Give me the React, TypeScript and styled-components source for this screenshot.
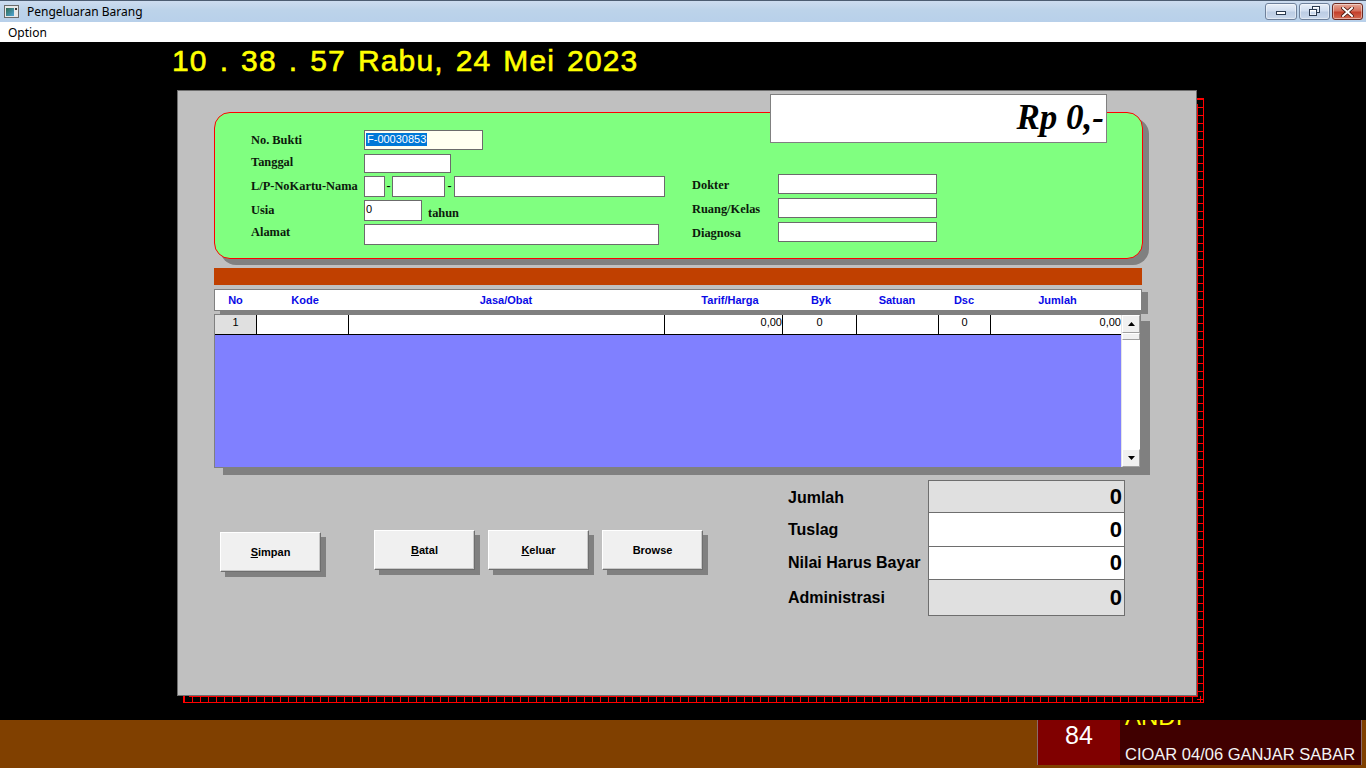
import React from 'react';
import styled, { createGlobalStyle } from 'styled-components';

const Global = createGlobalStyle`
  html, body { margin: 0; padding: 0; background: #000; }
  body { width: 1366px; height: 768px; overflow: hidden; }
  * { box-sizing: border-box; }
`;

const Screen = styled.div`
  width: 1366px;
  height: 768px;
  display: flex;
  flex-direction: column;
  overflow: hidden;
  font-family: "Liberation Sans", Arial, sans-serif;
`;

/* ---------- window chrome ---------- */
const TitleBar = styled.div`
  height: 22px;
  flex: none;
  display: flex;
  align-items: center;
  border-top: 1px solid #4d5d72;
  background: linear-gradient(#cddcef, #bcd3ea 45%, #b8d0ea);
  padding-left: 4px;
`;

const TitleText = styled.span`
  font: 12px "Noto Sans", "Open Sans", sans-serif;
  color: #000;
  margin-left: 8px;
  line-height: 16px;
`;

const WinButtons = styled.div`
  margin-left: auto;
  align-self: flex-start;
  margin-top: 2px;
  margin-right: 3px;
  display: flex;
  gap: 2px;
`;

const WinBtn = styled.div<{ $close?: boolean; $w: number }>`
  width: ${p => p.$w}px;
  height: 17px;
  border: 1px solid ${p => (p.$close ? '#6b2a22' : '#6f819b')};
  border-radius: 3px;
  background: ${p =>
    p.$close
      ? 'linear-gradient(#e6a796, #d5705d 45%, #c43f2b 55%, #d46a52)'
      : 'linear-gradient(#e8eff8, #d1def0 45%, #bccde4 55%, #c9d8ec)'};
  box-shadow: inset 0 0 0 1px rgba(255, 255, 255, 0.45);
  display: flex;
  align-items: center;
  justify-content: center;
`;

const MenuBar = styled.div`
  height: 20px;
  flex: none;
  background: #fff;
  display: flex;
  align-items: center;
  padding-left: 8px;
  font: 12px "Noto Sans", "Open Sans", sans-serif;
  color: #000;
`;

/* ---------- main black area ---------- */
const Main = styled.div`
  flex: 1;
  background: #000;
  isolation: isolate;
  display: flex;
  flex-direction: column;
`;

const Clock = styled.div`
  margin: 2px 0 0 172px;
  height: 30px;
  line-height: 30px;
  font: 30px "Liberation Sans", Arial, sans-serif;
  -webkit-text-stroke: 0.6px #ffff00;
  letter-spacing: 1.15px;
  word-spacing: 2.5px;
  color: #ffff00;
  white-space: nowrap;
`;

const Panel = styled.div`
  position: relative;
  margin: 16px 0 0 177px;
  width: 1020px;
  height: 606px;
  background: #c0c0c0;
  border: 1px solid #6e6e6e;
  padding: 21px 0 0 36px;
  display: flex;
  flex-direction: column;
  align-items: flex-start;
`;

const Ladder = styled.div`
  position: absolute;
  left: 5px;
  top: 7px;
  right: -8px;
  bottom: -8px;
  z-index: -1;
  border: 1px solid #ff0000;
  background:
    repeating-linear-gradient(to bottom, #ff0000 0 1px, transparent 1px 8px) right top / 6px 100% no-repeat,
    repeating-linear-gradient(to right, #ff0000 0 1px, transparent 1px 8px) left bottom / 100% 6px no-repeat;
  &::after {
    content: '';
    position: absolute;
    inset: 5px;
    background: #000;
    border: 1px solid #ff0000;
  }
`;

/* ---------- patient box ---------- */
const GreenBox = styled.div`
  width: 929px;
  height: 147px;
  background: #80ff80;
  border: 1px solid #ff0000;
  border-radius: 16px;
  box-shadow: 6px 6px 0 #808080;
  padding: 17px 0 0 36px;
  display: flex;
  align-items: flex-start;
`;

const LeftForm = styled.div`
  width: 414px;
  display: grid;
  grid-template-columns: 113px auto;
  grid-template-rows: 24px 22px 24px 24px 21px;
`;

const RightForm = styled.div`
  margin: 44px 0 0 27px;
  display: grid;
  grid-template-columns: 86px 159px;
  grid-template-rows: 24px 24px 20px;
`;

const Label = styled.span<{ $shift?: number }>`
  font: bold 12.4px "Liberation Serif", "Times New Roman", serif;
  line-height: 20px;
  margin-top: ${p => p.$shift ?? 0}px;
  color: #0c1a0c;
  white-space: nowrap;
`;

const FieldRow = styled.div`
  display: flex;
  align-items: flex-start;
`;

const Field = styled.div<{ $w: number; $h?: number; $bg?: string }>`
  width: ${p => p.$w}px;
  height: ${p => p.$h ?? 20}px;
  flex: none;
  background: ${p => p.$bg ?? '#fff'};
  border: 1px solid #6b6b6b;
  font: 11px "Liberation Sans", Arial, sans-serif;
  line-height: 13px;
  color: #000;
  padding: 2px 0 0 1px;
  overflow: hidden;
  white-space: nowrap;
`;

const Selected = styled.span`
  display: inline-block;
  background: #0078d7;
  color: #fff;
  padding: 0 1px;
  height: 13px;
`;

const Dash = styled.span<{ $w: number }>`
  width: ${p => p.$w}px;
  flex: none;
  text-align: center;
  font: bold 12px "Liberation Serif", "Times New Roman", serif;
  line-height: 20px;
  color: #000;
`;

const Unit = styled.span`
  margin: 3px 0 0 6px;
  font: bold 12.4px "Liberation Serif", "Times New Roman", serif;
  line-height: 20px;
  color: #0c1a0c;
`;

const RpBox = styled.div`
  position: absolute;
  left: 592px;
  top: 3px;
  width: 337px;
  height: 49px;
  background: #fff;
  border: 1px solid #808080;
  padding-right: 2px;
  text-align: right;
  font: italic bold 35px "Liberation Serif", "Times New Roman", serif;
  line-height: 46px;
  color: #000;
  white-space: nowrap;
`;

/* ---------- item grid ---------- */
const OrangeBar = styled.div`
  margin-top: 9px;
  width: 928px;
  height: 17px;
  background: #c04000;
`;

const columns = '41px 92px 316px 118px 74px 82px 52px 131px';

const GridHeader = styled.div`
  margin-top: 4px;
  width: 928px;
  height: 22px;
  background: #fff;
  border: 1px solid #808080;
  box-shadow: 6px 3px 0 #808080;
  display: grid;
  grid-template-columns: ${columns} 1fr;
  align-items: center;
`;

const HeadCell = styled.span<{ $shift?: number }>`
  text-align: center;
  padding-left: ${p => (p.$shift ?? 0) * 2}px;
  font: bold 11px "Liberation Sans", Arial, sans-serif;
  color: #0a0ae6;
  white-space: nowrap;
`;

const Grid = styled.div`
  margin-top: 3px;
  width: 927px;
  height: 154px;
  border: 1px solid #808080;
  box-shadow: 9px 7px 0 #808080;
  background: #8080ff;
  display: flex;
`;

const GridBody = styled.div`
  flex: 1;
  display: flex;
  flex-direction: column;
`;

const DataRow = styled.div`
  height: 20px;
  display: grid;
  grid-template-columns: ${columns};
  border-bottom: 1px solid #000;
`;

const Cell = styled.div<{ $align?: 'left' | 'center' | 'right'; $fixed?: boolean }>`
  background: ${p => (p.$fixed ? '#e0e0e0' : '#fff')};
  border-left: ${p => (p.$fixed ? 'none' : '1px solid #000')};
  text-align: ${p => p.$align ?? 'left'};
  font: 11px "Liberation Sans", Arial, sans-serif;
  line-height: 15px;
  color: #000;
  overflow: hidden;
  white-space: nowrap;
`;

const ScrollBar = styled.div`
  width: 19px;
  background: #fff;
  border-left: 1px solid #e4e4e4;
  display: flex;
  flex-direction: column;
`;

const ScrollBtn = styled.div`
  height: 18px;
  background: #f0f0f0;
  border: 1px solid #fff;
  border-right-color: #a0a0a0;
  border-bottom-color: #a0a0a0;
  display: flex;
  align-items: center;
  justify-content: center;
`;

const Thumb = styled.div`
  height: 7px;
  background: #f0f0f0;
  border: 1px solid #fff;
  border-right-color: #a0a0a0;
  border-bottom-color: #a0a0a0;
`;

const Track = styled.div`
  flex: 1;
`;

/* ---------- lower part ---------- */
const Lower = styled.div`
  margin-top: 12px;
  display: flex;
  align-items: flex-start;
`;

const ButtonGroup = styled.div`
  margin-left: 6px;
  padding-top: 50px;
  display: flex;
  align-items: flex-start;
`;

const Button = styled.div<{ $drop?: number; $gap?: number }>`
  width: 101px;
  height: 40px;
  margin-top: ${p => p.$drop ?? 0}px;
  margin-right: ${p => p.$gap ?? 0}px;
  background: #f0f0f0;
  border: 1px solid;
  border-color: #fff #6e6e6e #6e6e6e #fff;
  box-shadow: 5px 5px 0 #808080, inset -1px -1px 0 #c8c8c8;
  display: flex;
  align-items: center;
  justify-content: center;
  font: bold 11px "Liberation Sans", Arial, sans-serif;
  color: #000;
  u { text-decoration: underline; }
`;

const Totals = styled.div`
  margin-left: 85px;
  display: flex;
  flex-direction: column;
`;

const TotalRow = styled.div`
  display: flex;
`;

const TotalLabel = styled.div<{ $shift?: number }>`
  width: 140px;
  display: flex;
  align-items: center;
  padding-top: ${p => p.$shift ?? 0}px;
  font: bold 16px "Liberation Sans", Arial, sans-serif;
  color: #000;
  white-space: nowrap;
`;

const TotalValue = styled.div<{ $h: number; $tone: string; $last?: boolean }>`
  width: 197px;
  height: ${p => p.$h}px;
  background: ${p => p.$tone};
  border: 1px solid #6e6e6e;
  border-bottom-width: ${p => (p.$last ? 1 : 0)}px;
  display: flex;
  align-items: center;
  justify-content: flex-end;
  padding-right: 2px;
  font: bold 22px "Liberation Sans", Arial, sans-serif;
  color: #000;
`;

/* ---------- bottom status bar ---------- */
const StatusBar = styled.div`
  height: 48px;
  flex: none;
  background: #804000;
  display: flex;
  justify-content: flex-end;
  align-items: flex-start;
  padding-right: 4px;
`;

const StatusBox = styled.div`
  width: 325px;
  height: 45px;
  display: flex;
  border-left: 1px solid #8a6a6a;
  border-right: 1px solid #8a6a6a;
`;

const NumCell = styled.div`
  width: 82px;
  background: #800000;
  color: #fff;
  text-align: center;
  padding-top: 3px;
  font: 25px "Liberation Sans Narrow", "Liberation Sans", Arial, sans-serif;
  font-stretch: condensed;
  line-height: 24px;
`;

const NameCell = styled.div`
  flex: 1;
  background: #400000;
  overflow: hidden;
  padding-left: 5px;
  display: flex;
  flex-direction: column;
`;

const PatientName = styled.div`
  margin-top: -15px;
  font: 24px "Liberation Sans", Arial, sans-serif;
  line-height: 24px;
  color: #ffff00;
  white-space: nowrap;
`;

const Address = styled.div`
  margin-top: 16px;
  font: 16.5px "Liberation Sans", Arial, sans-serif;
  line-height: 18px;
  color: #f4f4f4;
  white-space: nowrap;
`;

/* ---------- icons ---------- */
const AppIcon = () => (
  <svg width="15" height="13" viewBox="0 0 15 13">
    <rect x="0.5" y="0.5" width="14" height="12" fill="#e8e8e8" stroke="#6a6a6a" />
    <defs>
      <linearGradient id="ai" x1="0" y1="0" x2="1" y2="1">
        <stop offset="0" stopColor="#2f6a4f" />
        <stop offset="1" stopColor="#4ea6d8" />
      </linearGradient>
    </defs>
    <rect x="2" y="3" width="8" height="8" fill="url(#ai)" />
    <rect x="11" y="3" width="2" height="2" fill="#333" />
  </svg>
);

const MinIcon = () => (
  <svg width="12" height="8" viewBox="0 0 12 8">
    <rect x="1.5" y="3.5" width="9" height="3" fill="#fff" stroke="#2b3a4f" />
  </svg>
);

const RestoreIcon = () => (
  <svg width="12" height="11" viewBox="0 0 12 11">
    <rect x="3.5" y="0.5" width="7" height="6" fill="#fff" stroke="#2b3a4f" />
    <rect x="4.5" y="2.5" width="5" height="3" fill="#c9d8ec" />
    <rect x="0.5" y="3.5" width="7" height="6" fill="#fff" stroke="#2b3a4f" />
    <rect x="1.5" y="5.5" width="5" height="3" fill="#c9d8ec" />
  </svg>
);

const CloseIcon = () => (
  <svg width="13" height="10" viewBox="0 0 13 10">
    <path d="M2 1 L11 9 M11 1 L2 9" stroke="#4a1a12" strokeWidth="3.6" strokeLinecap="square" />
    <path d="M2 1 L11 9 M11 1 L2 9" stroke="#fff" strokeWidth="2" strokeLinecap="square" />
  </svg>
);

const Arrow = ({ down }: { down?: boolean }) => (
  <svg width="7" height="4" viewBox="0 0 7 4">
    <path d={down ? 'M0 0 H7 L3.5 4 Z' : 'M0 4 H7 L3.5 0 Z'} fill="#000" />
  </svg>
);

const headers: { text: string; shift?: number }[] = [
  { text: 'No' },
  { text: 'Kode', shift: 3 },
  { text: 'Jasa/Obat' },
  { text: 'Tarif/Harga', shift: 7 },
  { text: 'Byk', shift: 2 },
  { text: 'Satuan' },
  { text: 'Dsc' },
  { text: 'Jumlah', shift: 2 },
];

const totals = [
  { label: 'Jumlah', h: 32, tone: '#e0e0e0', shift: 3 },
  { label: 'Tuslag', h: 34, tone: '#fff', shift: 1 },
  { label: 'Nilai Harus Bayar', h: 33, tone: '#fff', shift: 1 },
  { label: 'Administrasi', h: 37, tone: '#e0e0e0', shift: 0 },
];

export default function App() {
  return (
    <Screen>
      <Global />
      <TitleBar>
        <AppIcon />
        <TitleText>Pengeluaran Barang</TitleText>
        <WinButtons>
          <WinBtn $w={32}><MinIcon /></WinBtn>
          <WinBtn $w={31}><RestoreIcon /></WinBtn>
          <WinBtn $w={31} $close><CloseIcon /></WinBtn>
        </WinButtons>
      </TitleBar>
      <MenuBar>Option</MenuBar>

      <Main>
        <Clock>10 . 38 . 57 Rabu, 24 Mei 2023</Clock>
        <Panel>
          <Ladder />
          <GreenBox>
            <LeftForm>
              <Label>No. Bukti</Label>
              <FieldRow>
                <Field $w={119} $bg="#fffff0"><Selected>F-00030853</Selected></Field>
              </FieldRow>

              <Label $shift={-2}>Tanggal</Label>
              <FieldRow><Field $w={87} $h={19} /></FieldRow>

              <Label>L/P-NoKartu-Nama</Label>
              <FieldRow>
                <Field $w={21} $h={21} />
                <Dash $w={7}>-</Dash>
                <Field $w={53} $h={21} />
                <Dash $w={9}>-</Dash>
                <Field $w={211} $h={21} />
              </FieldRow>

              <Label>Usia</Label>
              <FieldRow>
                <Field $w={58} $h={21}>0</Field>
                <Unit>tahun</Unit>
              </FieldRow>

              <Label $shift={-2}>Alamat</Label>
              <FieldRow><Field $w={295} $h={21} /></FieldRow>
            </LeftForm>

            <RightForm>
              <Label $shift={1}>Dokter</Label>
              <FieldRow><Field $w={159} /></FieldRow>
              <Label $shift={1}>Ruang/Kelas</Label>
              <FieldRow><Field $w={159} /></FieldRow>
              <Label $shift={1}>Diagnosa</Label>
              <FieldRow><Field $w={159} /></FieldRow>
            </RightForm>
          </GreenBox>

          <RpBox>Rp 0,-</RpBox>

          <OrangeBar />

          <GridHeader>
            {headers.map(h => (
              <HeadCell key={h.text} $shift={h.shift}>{h.text}</HeadCell>
            ))}
          </GridHeader>

          <Grid>
            <GridBody>
              <DataRow>
                <Cell $fixed $align="center">1</Cell>
                <Cell />
                <Cell />
                <Cell $align="right">0,00</Cell>
                <Cell $align="center">0</Cell>
                <Cell />
                <Cell $align="center">0</Cell>
                <Cell $align="right">0,00</Cell>
              </DataRow>
            </GridBody>
            <ScrollBar>
              <ScrollBtn><Arrow /></ScrollBtn>
              <Thumb />
              <Track />
              <ScrollBtn><Arrow down /></ScrollBtn>
            </ScrollBar>
          </Grid>

          <Lower>
            <ButtonGroup>
              <Button $drop={2} $gap={53}><span><u>S</u>impan</span></Button>
              <Button $gap={13}><span><u>B</u>atal</span></Button>
              <Button $gap={13}><span><u>K</u>eluar</span></Button>
              <Button>Browse</Button>
            </ButtonGroup>

            <Totals>
              {totals.map((t, i) => (
                <TotalRow key={t.label}>
                  <TotalLabel $shift={t.shift}>{t.label}</TotalLabel>
                  <TotalValue $h={t.h} $tone={t.tone} $last={i === totals.length - 1}>0</TotalValue>
                </TotalRow>
              ))}
            </Totals>
          </Lower>
        </Panel>
      </Main>

      <StatusBar>
        <StatusBox>
          <NumCell>84</NumCell>
          <NameCell>
            <PatientName>ANDI</PatientName>
            <Address>CIOAR 04/06 GANJAR SABAR</Address>
          </NameCell>
        </StatusBox>
      </StatusBar>
    </Screen>
  );
}
